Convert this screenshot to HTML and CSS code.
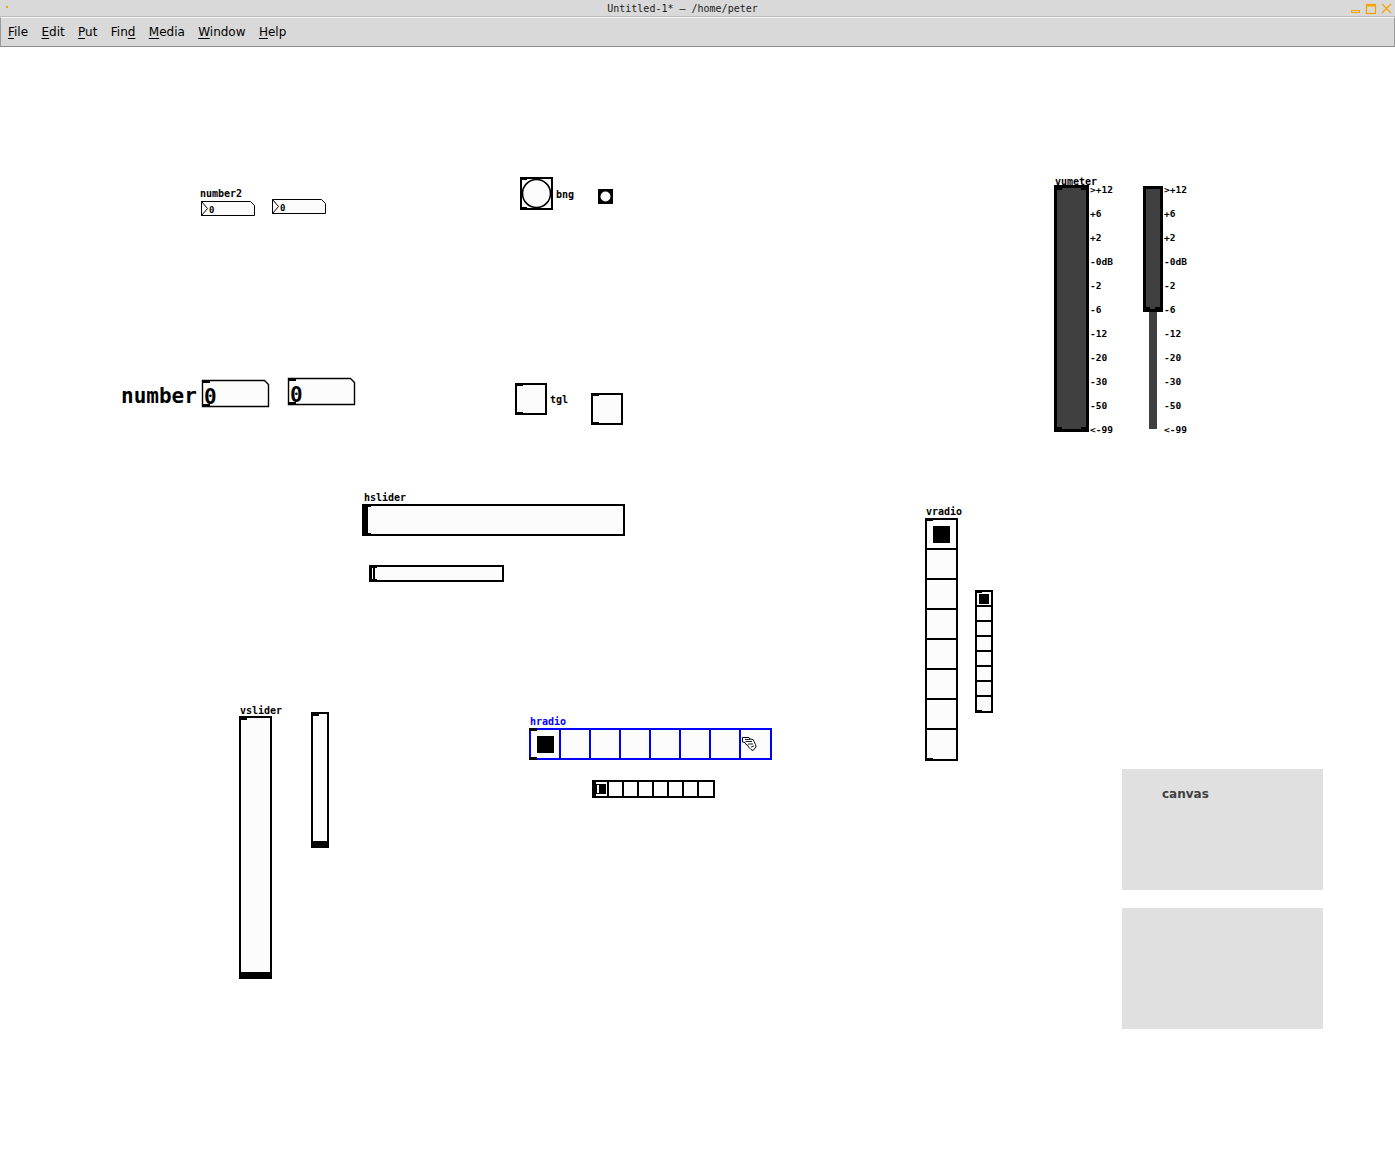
FILE: index.html
```html
<!DOCTYPE html>
<html>
<head>
<meta charset="utf-8">
<title>Untitled-1*</title>
<link rel="stylesheet" href="styles.css">
</head>
<body>
<div class="window">
  <div class="titlebar">
    <span class="app-dot"></span>
    <span class="title">Untitled-1* – /home/peter</span>
    <div class="wm-buttons">
      <svg width="44" height="14" viewBox="0 0 44 14">
        <rect x="1.5" y="9.5" width="8" height="2" fill="none" stroke="#f5a300"/>
        <rect x="16.5" y="3.5" width="9" height="9" fill="none" stroke="#f5a300" stroke-width="1.2"/>
        <rect x="16.5" y="3.5" width="9" height="2" fill="#f5a300"/>
        <path d="M32 3 L41 12 M41 3 L32 12" stroke="#f5a300" stroke-width="1.2"/>
      </svg>
    </div>
  </div>
  <div class="menubar">
    <span class="menu-item"><u>F</u>ile</span>
    <span class="menu-item"><u>E</u>dit</span>
    <span class="menu-item"><u>P</u>ut</span>
    <span class="menu-item">Fin<u>d</u></span>
    <span class="menu-item"><u>M</u>edia</span>
    <span class="menu-item"><u>W</u>indow</span>
    <span class="menu-item"><u>H</u>elp</span>
  </div>

  <div class="patch">
    <!-- number2 -->
    <span class="lbl lbl-number2">number2</span>
    <svg class="w nbx-a" width="56" height="17" viewBox="0 0 56 17">
      <polygon points="1.5,1.5 50.5,1.5 54.5,5.5 54.5,15.5 1.5,15.5" fill="#fcfcfc" stroke="#000"/>
      <polyline points="1.5,1.5 7.5,8.5 1.5,15.5" fill="none" stroke="#000"/>
      <rect x="1" y="1" width="2" height="2" fill="#000"/>
      <text x="9" y="12.5" class="svgtxt-sm">0</text>
    </svg>
    <svg class="w nbx-b" width="56" height="17" viewBox="0 0 56 17">
      <polygon points="1.5,1.5 50.5,1.5 54.5,5.5 54.5,15.5 1.5,15.5" fill="#fcfcfc" stroke="#000"/>
      <polyline points="1.5,1.5 7.5,8.5 1.5,15.5" fill="none" stroke="#000"/>
      <text x="9" y="12.5" class="svgtxt-sm">0</text>
    </svg>

    <!-- bng -->
    <svg class="w bng-a" width="34" height="34" viewBox="0 0 34 34">
      <rect x="1" y="1" width="31" height="31" fill="#fcfcfc" stroke="#000" stroke-width="2"/>
      <circle cx="16.5" cy="16.5" r="14" fill="#fcfcfc" stroke="#000" stroke-width="1.6"/>
      <rect x="0" y="0" width="7" height="3" fill="#000"/>
      <rect x="0" y="30" width="7" height="3" fill="#000"/>
    </svg>
    <span class="lbl lbl-bng">bng</span>
    <svg class="w bng-b" width="17" height="17" viewBox="0 0 17 17">
      <rect x="1" y="1" width="15" height="15" fill="#000"/>
      <circle cx="8.5" cy="8.5" r="5" fill="#fcfcfc"/>
    </svg>

    <!-- big number -->
    <span class="lbl-big lbl-number">number</span>
    <svg class="w num-a" width="71" height="30" viewBox="0 0 71 30">
      <polygon points="1.5,1.5 63.5,1.5 67.5,5.5 67.5,27.5 1.5,27.5" fill="#fcfcfc" stroke="#000" stroke-width="1.4"/>
      <rect x="1" y="1" width="8" height="3" fill="#000"/>
      <rect x="1" y="25" width="8" height="3" fill="#000"/>
      <text x="3" y="24.5" class="svgtxt-big">0</text>
    </svg>
    <svg class="w num-b" width="71" height="30" viewBox="0 0 71 30">
      <polygon points="1.5,1.5 63.5,1.5 67.5,5.5 67.5,27.5 1.5,27.5" fill="#fcfcfc" stroke="#000" stroke-width="1.4"/>
      <rect x="1" y="1" width="8" height="3" fill="#000"/>
      <rect x="1" y="25" width="8" height="3" fill="#000"/>
      <text x="3" y="24.5" class="svgtxt-big">0</text>
    </svg>

    <!-- tgl -->
    <svg class="w tgl-a" width="33" height="33" viewBox="0 0 33 33">
      <rect x="1" y="1" width="30" height="30" fill="#fcfcfc" stroke="#000" stroke-width="2"/>
      <rect x="0" y="0" width="8" height="3" fill="#000"/>
      <rect x="0" y="29" width="8" height="3" fill="#000"/>
    </svg>
    <span class="lbl lbl-tgl">tgl</span>
    <svg class="w tgl-b" width="33" height="33" viewBox="0 0 33 33">
      <rect x="1" y="1" width="30" height="30" fill="#fcfcfc" stroke="#000" stroke-width="2"/>
      <rect x="0" y="0" width="8" height="3" fill="#000"/>
      <rect x="0" y="29" width="8" height="3" fill="#000"/>
    </svg>

    <!-- vumeter -->
    <span class="lbl lbl-vumeter">vumeter</span>
    <svg class="w vu-a" width="35" height="247" viewBox="0 0 35 247">
      <rect x="1.5" y="1.5" width="32" height="244" fill="#404040" stroke="#000" stroke-width="3"/>
      <rect x="0" y="0" width="8" height="5" fill="#000"/>
      <rect x="27" y="0" width="8" height="5" fill="#000"/>
      <rect x="0" y="242" width="8" height="5" fill="#000"/>
      <rect x="27" y="242" width="8" height="5" fill="#000"/>
    </svg>
    <div class="scale scale-a">
      <span>&gt;+12</span><span>+6</span><span>+2</span><span>-0dB</span><span>-2</span><span>-6</span><span>-12</span><span>-20</span><span>-30</span><span>-50</span><span>&lt;-99</span>
    </div>
    <svg class="w vu-b" width="20" height="244" viewBox="0 0 20 244">
      <rect x="1.25" y="1.25" width="17" height="123" fill="#404040" stroke="#000" stroke-width="2.5"/>
      <rect x="0" y="121" width="7" height="5" fill="#000"/>
      <rect x="12" y="121" width="7" height="5" fill="#000"/>
      <rect x="6" y="126" width="8" height="117" fill="#404040"/>
    </svg>
    <div class="scale scale-b">
      <span>&gt;+12</span><span>+6</span><span>+2</span><span>-0dB</span><span>-2</span><span>-6</span><span>-12</span><span>-20</span><span>-30</span><span>-50</span><span>&lt;-99</span>
    </div>

    <!-- hslider -->
    <span class="lbl lbl-hslider">hslider</span>
    <svg class="w hsl-a" width="264" height="33" viewBox="0 0 264 33">
      <rect x="1" y="1" width="261" height="30" fill="#fcfcfc" stroke="#000" stroke-width="2"/>
      <rect x="0" y="0" width="6" height="32" fill="#000"/>
      <rect x="0" y="0" width="9" height="3" fill="#000"/>
      <rect x="0" y="29" width="9" height="3" fill="#000"/>
    </svg>
    <svg class="w hsl-b" width="136" height="18" viewBox="0 0 136 18">
      <rect x="1" y="1" width="133" height="15" fill="#fcfcfc" stroke="#000" stroke-width="2"/>
      <rect x="0" y="0" width="3" height="17" fill="#000"/>
      <rect x="4" y="2" width="2" height="13" fill="#000"/>
      <rect x="0" y="0" width="8" height="3" fill="#000"/>
      <rect x="0" y="14" width="8" height="3" fill="#000"/>
    </svg>

    <!-- vradio -->
    <span class="lbl lbl-vradio">vradio</span>
    <svg class="w vrd-a" width="33" height="243" viewBox="0 0 33 243">
      <rect x="1" y="1" width="31" height="241" fill="#fcfcfc" stroke="#000" stroke-width="2"/>
      <path d="M1 31 H32 M1 61 H32 M1 91 H32 M1 121 H32 M1 151 H32 M1 181 H32 M1 211 H32" stroke="#000" stroke-width="2"/>
      <rect x="8" y="8" width="17" height="17" fill="#000"/>
      <rect x="0" y="0" width="8" height="3" fill="#000"/>
      <rect x="0" y="240" width="8" height="3" fill="#000"/>
    </svg>
    <svg class="w vrd-b" width="18" height="123" viewBox="0 0 18 123">
      <rect x="1" y="1" width="16" height="121" fill="#fcfcfc" stroke="#000" stroke-width="2"/>
      <path d="M1 16 H17 M1 31 H17 M1 46 H17 M1 61 H17 M1 76 H17 M1 91 H17 M1 106 H17" stroke="#000" stroke-width="1.6"/>
      <rect x="4" y="4" width="10" height="10" fill="#000"/>
      <rect x="0" y="0" width="7" height="3" fill="#000"/>
      <rect x="0" y="120" width="7" height="3" fill="#000"/>
    </svg>

    <!-- hradio -->
    <span class="lbl lbl-hradio">hradio</span>
    <svg class="w hrd-a" width="243" height="33" viewBox="0 0 243 33">
      <rect x="1" y="1" width="241" height="30" fill="#fcfcfc" stroke="#0000ff" stroke-width="2"/>
      <path d="M31 1 V31 M61 1 V31 M91 1 V31 M121 1 V31 M151 1 V31 M181 1 V31 M211 1 V31" stroke="#0000ff" stroke-width="2"/>
      <rect x="8" y="8" width="17" height="17" fill="#000"/>
      <rect x="0" y="0" width="8" height="3" fill="#000"/>
      <rect x="0" y="29" width="8" height="3" fill="#000"/>
      <g transform="translate(212,8)">
        <path d="M1.5 1.5 L8 1.5 L9 3 L12 3.5 L13 5.5 L14.5 8.5 L15 11 L12 14.5 L10 13.5 L7.5 11 L6.5 9 L5 8.5 L4 6.5 L1.5 6 Z" fill="#fff" stroke="#000"/>
        <path d="M4 3.5 L9 3.5 M4.5 5.5 L11 5.5 M7 8 L12 8 M10 11 L13 10" stroke="#000" fill="none" stroke-width="0.9"/>
      </g>
    </svg>
    <svg class="w hrd-b" width="123" height="18" viewBox="0 0 123 18">
      <rect x="1" y="1" width="121" height="16" fill="#fcfcfc" stroke="#000" stroke-width="2"/>
      <path d="M16 1 V17 M31 1 V17 M46 1 V17 M61 1 V17 M76 1 V17 M91 1 V17 M106 1 V17" stroke="#000" stroke-width="1.6"/>
      <rect x="4" y="4" width="10" height="10" fill="#000"/>
      <rect x="0" y="0" width="4" height="18" fill="#000"/>
      <rect x="5" y="5" width="1.5" height="8" fill="#fcfcfc"/>
    </svg>

    <!-- vslider -->
    <span class="lbl lbl-vslider">vslider</span>
    <svg class="w vsl-a" width="33" height="263" viewBox="0 0 33 263">
      <rect x="1" y="1" width="31" height="261" fill="#fcfcfc" stroke="#000" stroke-width="2"/>
      <rect x="0" y="256" width="33" height="7" fill="#000"/>
      <rect x="0" y="0" width="8" height="4" fill="#000"/>
    </svg>
    <svg class="w vsl-b" width="18" height="136" viewBox="0 0 18 136">
      <rect x="1" y="1" width="16" height="134" fill="#fcfcfc" stroke="#000" stroke-width="2"/>
      <rect x="0" y="129" width="18" height="7" fill="#000"/>
      <rect x="0" y="0" width="8" height="4" fill="#000"/>
    </svg>

    <!-- canvas -->
    <div class="cnv cnv-a"></div>
    <span class="cnv-label">canvas</span>
    <div class="cnv cnv-b"></div>
  </div>
</div>
</body>
</html>
```

FILE: styles.css
```css
html, body {
  margin: 0;
  padding: 0;
  background: #ffffff;
}

.window {
  position: relative;
  width: 1395px;
  height: 1173px;
  background: #ffffff;
  overflow: hidden;
}

.titlebar {
  height: 16px;
  background: #d9d9d9;
  border-bottom: 1px solid #bcbcbc;
  display: flex;
  align-items: center;
  justify-content: center;
  position: relative;
  font-family: "DejaVu Sans Mono", monospace;
  font-size: 10px;
  color: #1a1a1a;
}

.title {
  padding-right: 30px;
  padding-top: 2px;
  line-height: 16px;
}

.app-dot {
  position: absolute;
  left: 6px;
  top: 6px;
  width: 2px;
  height: 2px;
  background: #f5a300;
}

.wm-buttons {
  position: absolute;
  right: 1px;
  top: 1px;
  height: 14px;
}

.wm-buttons svg {
  display: block;
}

.menubar {
  height: 28px;
  background: #d9d9d9;
  border-top: 1px solid #f4f4f4;
  border-bottom: 1px solid #8c8c8c;
  border-left: 1px solid #9a9a9a;
  border-right: 1px solid #9a9a9a;
  display: flex;
  align-items: center;
  padding-left: 0.3px;
  font-family: "DejaVu Sans", sans-serif;
  font-size: 12px;
  color: #000;
}

.menu-item {
  padding: 0 6.7px;
  line-height: 28px;
}

.menu-item u {
  text-decoration-thickness: 1px;
  text-underline-offset: 2px;
}

.patch {
  position: absolute;
  left: 0;
  top: 0;
  width: 1395px;
  height: 1173px;
  pointer-events: none;
}

.w {
  position: absolute;
  display: block;
  shape-rendering: crispEdges;
}

.w circle, .w polyline, .w polygon, .w g path {
  shape-rendering: geometricPrecision;
}

.lbl {
  position: absolute;
  font-family: "DejaVu Sans Mono", monospace;
  font-weight: bold;
  font-size: 10px;
  line-height: 10px;
  color: #000;
  white-space: nowrap;
}

.lbl-big {
  position: absolute;
  font-family: "DejaVu Sans Mono", monospace;
  font-weight: bold;
  font-size: 21px;
  line-height: 21px;
  color: #000;
  white-space: nowrap;
}

.svgtxt-sm {
  font-family: "DejaVu Sans Mono", monospace;
  font-weight: bold;
  font-size: 9px;
  fill: #000;
}

.svgtxt-big {
  font-family: "DejaVu Sans Mono", monospace;
  font-weight: bold;
  font-size: 21px;
  fill: #000;
}

/* number2 */
.lbl-number2 { left: 200px; top: 189px; }
.nbx-a { left: 200px; top: 200px; }
.nbx-b { left: 271px; top: 198px; }

/* bng */
.bng-a { left: 520px; top: 177px; }
.lbl-bng { left: 556px; top: 190px; }
.bng-b { left: 597px; top: 188px; }

/* number */
.lbl-number { left: 121px; top: 386px; }
.num-a { left: 201px; top: 379px; }
.num-b { left: 287px; top: 377px; }

/* tgl */
.tgl-a { left: 515px; top: 383px; }
.lbl-tgl { left: 550px; top: 395px; }
.tgl-b { left: 591px; top: 393px; }

/* vumeter */
.lbl-vumeter { left: 1055px; top: 177px; }
.vu-a { left: 1054px; top: 185px; }
.vu-b { left: 1143px; top: 186px; }

.scale {
  position: absolute;
  top: 185px;
  display: flex;
  flex-direction: column;
  font-family: "DejaVu Sans Mono", monospace;
  font-weight: bold;
  font-size: 9.5px;
  color: #000;
}

.scale span {
  height: 24px;
  line-height: 10px;
}

.scale-a { left: 1090px; }
.scale-b { left: 1164px; }

/* hslider */
.lbl-hslider { left: 364px; top: 493px; }
.hsl-a { left: 362px; top: 504px; }
.hsl-b { left: 369px; top: 565px; }

/* vradio */
.lbl-vradio { left: 926px; top: 507px; }
.vrd-a { left: 925px; top: 518px; }
.vrd-b { left: 975px; top: 590px; }

/* hradio */
.lbl-hradio { left: 530px; top: 717px; color: #0000ff; }
.hrd-a { left: 529px; top: 728px; }
.hrd-b { left: 592px; top: 780px; }

/* vslider */
.lbl-vslider { left: 240px; top: 706px; }
.vsl-a { left: 239px; top: 716px; }
.vsl-b { left: 311px; top: 712px; }

/* canvas */
.cnv {
  position: absolute;
  left: 1122px;
  width: 201px;
  height: 121px;
  background: #e0e0e0;
}

.cnv-a { top: 769px; }
.cnv-b { top: 908px; }

.cnv-label {
  position: absolute;
  left: 1162px;
  top: 787px;
  font-family: "DejaVu Sans", sans-serif;
  font-weight: bold;
  font-size: 12px;
  line-height: 14px;
  color: #404040;
}
```
